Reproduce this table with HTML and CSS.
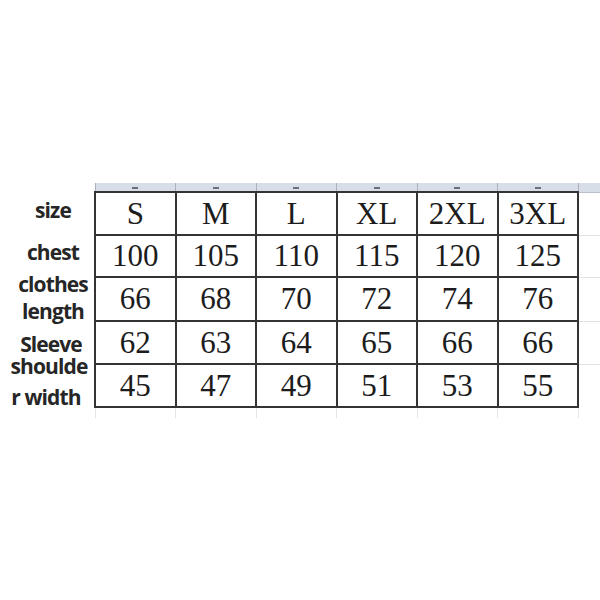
FILE: index.html
```html
<!DOCTYPE html>
<html>
<head>
<meta charset="utf-8">
<link rel="stylesheet" href="styles.css">
</head>
<body>
<div class="sheet">
  <div class="labels">
    <div class="lb l-size">size</div>
    <div class="lb l-chest">chest</div>
    <div class="lb l-clothes">clothes</div>
    <div class="lb l-length">length</div>
    <div class="lb l-sleeve">Sleeve</div>
    <div class="lb l-shoulde">shoulde</div>
    <div class="lb l-rwidth">r width</div>
  </div>
  <table class="grid">
    <colgroup>
      <col class="c"><col class="c"><col class="c"><col class="c"><col class="c"><col class="c"><col class="cx">
    </colgroup>
    <tr class="hdr">
      <td><span class="mk"></span></td><td><span class="mk"></span></td><td><span class="mk"></span></td><td><span class="mk"></span></td><td><span class="mk"></span></td><td><span class="mk"></span></td><td></td>
    </tr>
    <tr class="r1"><td>S</td><td>M</td><td>L</td><td>XL</td><td>2XL</td><td>3XL</td><td class="ext"></td></tr>
    <tr class="r2"><td>100</td><td>105</td><td>110</td><td>115</td><td>120</td><td>125</td><td class="ext"></td></tr>
    <tr class="r3"><td>66</td><td>68</td><td>70</td><td>72</td><td>74</td><td>76</td><td class="ext"></td></tr>
    <tr class="r4"><td>62</td><td>63</td><td>64</td><td>65</td><td>66</td><td>66</td><td class="ext"></td></tr>
    <tr class="r5"><td>45</td><td>47</td><td>49</td><td>51</td><td>53</td><td>55</td><td class="ext last"></td></tr>
    <tr class="ticks"><td></td><td></td><td></td><td></td><td></td><td></td><td></td></tr>
  </table>
</div>
</body>
</html>
```

FILE: styles.css
```css
html, body {
  margin: 0;
  padding: 0;
  background: #ffffff;
}

.sheet {
  display: flex;
  align-items: flex-start;
  padding-top: 183px;
  width: 600px;
}

.labels {
  width: 94px;
  flex: 0 0 94px;
  display: flex;
  flex-direction: column;
  align-items: center;
  padding-left: 12px;
  box-sizing: border-box;
  padding-top: 16px;
}

.lb {
  font-family: "Open Sans", "DejaVu Sans", sans-serif;
  font-weight: 700;
  font-size: 21px;
  line-height: 22px;
  height: 22px;
  letter-spacing: -0.9px;
  color: #262626;
  white-space: nowrap;
}

.l-chest { margin-top: 20px; }
.l-clothes { margin-top: 10px; }
.l-length { margin-top: 5px; }
.l-sleeve { margin-top: 11px; margin-left: -4px; }
.l-shoulde { margin-top: 0; margin-left: -8px; }
.l-rwidth { margin-top: 9px; margin-left: -14px; }

.grid {
  border-collapse: collapse;
  table-layout: fixed;
  width: 506px;
  flex: 0 0 506px;
}

.grid col.c { width: 80.5px; }
.grid col.cx { width: 23px; }

.grid td {
  border: 2px solid #343434;
  padding: 0;
  text-align: center;
  vertical-align: middle;
  font-family: "Liberation Serif", "Times New Roman", serif;
  font-size: 31px;
  color: #1c1c1c;
  line-height: 30px;
}

.grid tr.hdr td {
  height: 8px;
  border: none;
  border-left: 1px solid #aab2be;
  border-bottom: 1px solid #b9c0ca;
  background: #d7dee8;
  line-height: 0;
  font-size: 0;
}

.mk {
  display: inline-block;
  width: 6px;
  height: 2px;
  background: #6b6f78;
  vertical-align: top;
  margin-top: 2px;
}

.grid tr.r1 td { height: 41px; }
.grid tr.r2 td { height: 40px; }
.grid tr.r3 td { height: 42px; }
.grid tr.r4 td { height: 41px; }
.grid tr.r5 td { height: 41px; }

.grid td.ext {
  border: none;
  border-bottom: 1px solid #e2e2e2;
}

.grid td.ext.last {
  border-bottom: none;
}

.grid tr.ticks td {
  height: 10px;
  border: none;
  border-left: 1px solid #e6e6e6;
}
```
